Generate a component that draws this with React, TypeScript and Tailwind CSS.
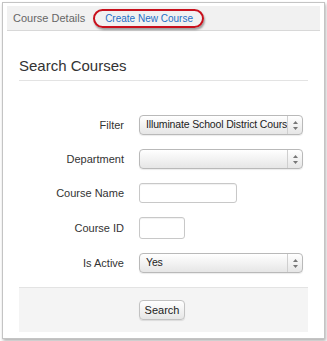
import React from "react";

const font = { fontFamily: '"Liberation Sans", Arial, sans-serif' };

function Arrows() {
  return (
    <svg width="5" height="9" viewBox="0 0 5 9" className="block">
      <path d="M2.5 0 L5 3 L0 3 Z" fill="#777" />
      <path d="M2.5 9 L5 6 L0 6 Z" fill="#777" />
    </svg>
  );
}

function Select({ value }: { value: string }) {
  return (
    <div className="flex h-[20px] w-[164px] items-stretch rounded-[4px] border border-[#b9b9b9] bg-gradient-to-b from-[#ffffff] to-[#e6e6e6] shadow-[0_1px_1px_rgba(0,0,0,0.08)]">
      <div className="flex flex-1 items-center overflow-hidden whitespace-nowrap pl-[6px] text-[10.5px] tracking-[-0.15px] text-[#222]">
        {value}
      </div>
      <div className="flex w-[15px] items-center justify-center border-l border-[#cfcfcf]">
        <Arrows />
      </div>
    </div>
  );
}

function Row({ label, children }: { label: string; children: React.ReactNode }) {
  return (
    <div className="flex items-center">
      <div className="w-[105px] text-right text-[11px] text-[#333]">{label}</div>
      <div className="ml-[15px]">{children}</div>
    </div>
  );
}

export default function App() {
  return (
    <div className="h-[341px] w-[327px] bg-white pt-[2px] pl-[2px]" style={font}>
      <div className="h-[337px] w-[323px] border border-[#c4c4c4] bg-white px-[4px] pt-[3px] shadow-[1px_2px_3px_rgba(0,0,0,0.3)]">
        <div className="relative flex h-[25px] items-center border-b border-[#d8d8d8] bg-[#f1f1f1] pl-[6px]">
          <span className="text-[11px] text-[#666]">Course Details</span>
          <span className="ml-[20px] text-[10px] text-[#1f6fc5]">Create New Course</span>
          <div className="absolute left-[86px] top-[3px] h-[19px] w-[111px] rounded-full border-[2.5px] border-[#c8101c] shadow-[1px_2px_2px_rgba(0,0,0,0.35)]" />
        </div>
        <div className="px-[12px]">
          <div className="border-b border-[#e3e3e3] pt-[26px] pb-[6px] text-[15px] leading-[17px] text-[#333]">
            Search Courses
          </div>
          <div className="flex flex-col gap-[14px] pt-[34px] pb-[14px]">
            <Row label="Filter">
              <Select value="Illuminate School District Cours" />
            </Row>
            <Row label="Department">
              <Select value="" />
            </Row>
            <Row label="Course Name">
              <div className="h-[20px] w-[98px] rounded-[3px] border border-[#c8c8c8] bg-white shadow-[inset_0_1px_1px_rgba(0,0,0,0.06)]" />
            </Row>
            <Row label="Course ID">
              <div className="h-[22px] w-[46px] rounded-[3px] border border-[#c8c8c8] bg-white shadow-[inset_0_1px_1px_rgba(0,0,0,0.06)]" />
            </Row>
            <Row label="Is Active">
              <Select value="Yes" />
            </Row>
          </div>
          <div className="flex h-[45px] items-center border-t border-[#e3e3e3] bg-[#f4f4f4] pl-[120px]">
            <div className="flex h-[20px] w-[46px] items-center justify-center rounded-[4px] border border-[#c2c2c2] bg-gradient-to-b from-[#ffffff] to-[#e6e6e6] text-[11px] text-[#222] shadow-[0_1px_1px_rgba(0,0,0,0.1)]">
              Search
            </div>
          </div>
        </div>
      </div>
    </div>
  );
}
